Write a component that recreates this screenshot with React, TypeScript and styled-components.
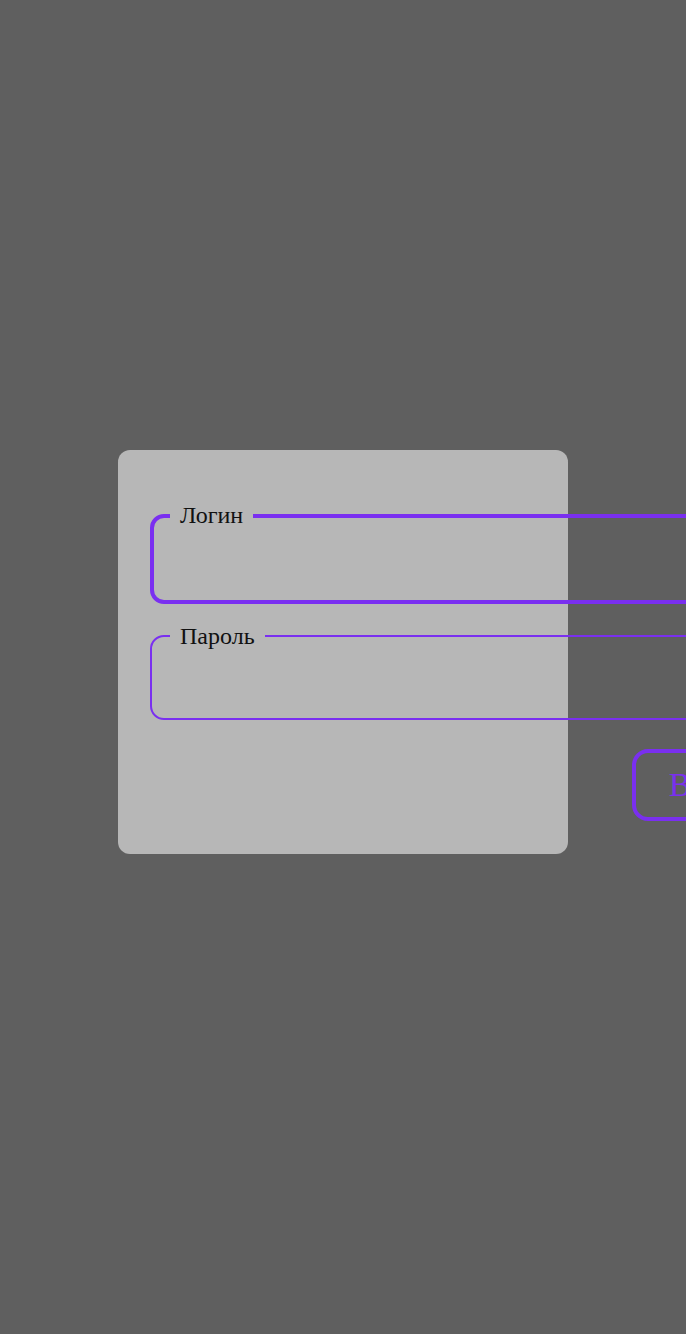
import React from "react";
import styled, { createGlobalStyle } from "styled-components";

const Global = createGlobalStyle`
  html, body {
    margin: 0;
    padding: 0;
    background: #5f5f5f;
    overflow: hidden;
    font-family: "Liberation Serif", "Times New Roman", serif;
  }
`;

const Page = styled.div`
  width: 686px;
  height: 1334px;
  display: flex;
  justify-content: center;
  align-items: flex-start;
  padding-top: 450px;
  box-sizing: border-box;
`;

const Card = styled.div`
  width: 450px;
  height: 404px;
  box-sizing: border-box;
  padding: 52px 32px 32px;
  background: #b7b7b7;
  border-radius: 12px;
  overflow: visible;
`;

const Form = styled.form`
  display: flex;
  flex-direction: column;
  width: 640px;
`;

const Field = styled.fieldset<{ $active?: boolean }>`
  margin: 0;
  box-sizing: border-box;
  width: 640px;
  border: ${(p) => (p.$active ? 4 : 2)}px solid #7a2ff0;
  border-radius: 14px;
  padding: 0 0 ${(p) => (p.$active ? 10 : 8)}px ${(p) => (p.$active ? 16 : 18)}px;
  min-inline-size: 0;

  & + & {
    margin-top: 19px;
  }
`;

const Legend = styled.legend`
  padding: 0 10px;
  font-size: 24px;
  line-height: 27.6px;
  color: #111;
`;

const Input = styled.input`
  display: block;
  width: 100%;
  height: 58px;
  border: none;
  background: transparent;
  outline: none;
  font-family: inherit;
  font-size: 24px;
`;

const Actions = styled.div`
  display: flex;
  padding-left: 482px;
  margin-top: 29px;
`;

const Button = styled.button`
  height: 72px;
  box-sizing: border-box;
  padding: 0 33px;
  border: 4px solid #7a2ff0;
  border-radius: 16px;
  background: transparent;
  color: #7a2ff0;
  font-family: "Liberation Serif", "Times New Roman", serif;
  font-size: 33px;
  white-space: nowrap;
`;

export default function App() {
  return (
    <>
      <Global />
      <Page>
        <Card>
          <Form onSubmit={(e) => e.preventDefault()}>
            <Field $active>
              <Legend>Логин</Legend>
              <Input type="text" />
            </Field>
            <Field>
              <Legend>Пароль</Legend>
              <Input type="password" />
            </Field>
            <Actions>
              <Button type="submit">Войти</Button>
            </Actions>
          </Form>
        </Card>
      </Page>
    </>
  );
}
